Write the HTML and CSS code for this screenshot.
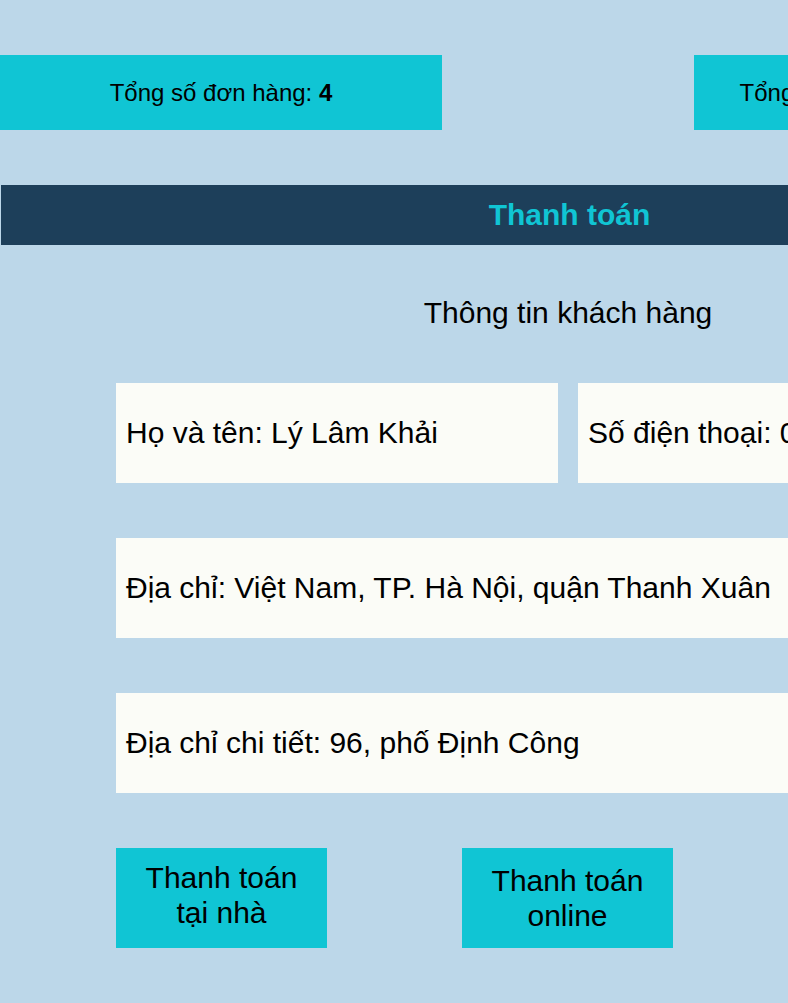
FILE: index.html
```html
<!DOCTYPE html>
<html lang="vi">
<head>
<meta charset="utf-8">
<title>Thanh toán</title>
<link rel="stylesheet" href="styles.css">
</head>
<body>
<div class="page">
  <div class="summary">
    <div class="stat"><span>Tổng số đơn hàng: <b>4</b></span></div>
    <div class="stat"><span>Tổng tiền hàng: <b>12.450.000 VNĐ</b></span></div>
  </div>
  <div class="bar"><h2 class="bar-title">Thanh toán</h2></div>
  <h3 class="section-title">Thông tin khách hàng</h3>
  <div class="info">
    <div class="row two">
      <div class="field">Họ và tên: Lý Lâm Khải</div>
      <div class="field">Số điện thoại: 0987654321</div>
    </div>
    <div class="row">
      <div class="field">Địa chỉ: Việt Nam, TP. Hà Nội, quận Thanh Xuân</div>
    </div>
    <div class="row">
      <div class="field">Địa chỉ chi tiết: 96, phố Định Công</div>
    </div>
    <div class="actions">
      <div class="btn btn-home">Thanh toán tại nhà</div>
      <div class="btn">Thanh toán online</div>
      <div class="btn">Quay lại</div>
    </div>
  </div>
</div>
</body>
</html>
```

FILE: styles.css
```css
html, body {
  margin: 0;
  padding: 0;
  background: #bcd7e9;
  font-family: "Liberation Sans", Arial, sans-serif;
  color: #000;
}
.page {
  width: 1136px;
  padding-top: 55px;
  padding-bottom: 60px;
}
.summary {
  display: flex;
  justify-content: space-between;
}
.stat {
  width: 442px;
  height: 75px;
  background: #10c5d4;
  display: flex;
  align-items: center;
  justify-content: center;
  font-size: 24px;
  white-space: nowrap;
}
.bar {
  margin: 55px -2px 0 1px;
  height: 60px;
  background: #1d3f5a;
  display: flex;
  align-items: center;
  justify-content: center;
}
.bar-title {
  margin: 0;
  color: #10c5d4;
  font-size: 30px;
  font-weight: bold;
}
.section-title {
  margin: 48px 0 0;
  height: 40px;
  line-height: 40px;
  text-align: center;
  font-size: 30px;
  font-weight: normal;
}
.info {
  width: 904px;
  margin: 50px auto 0;
  display: flex;
  flex-direction: column;
  gap: 55px;
}
.row {
  display: flex;
  gap: 20px;
}
.field {
  flex: 1;
  height: 100px;
  background: #fbfcf7;
  display: flex;
  align-items: center;
  padding: 0 10px;
  font-size: 30px;
  white-space: nowrap;
  overflow: hidden;
}
.actions {
  display: flex;
  gap: 135px;
}
.btn {
  width: 211px;
  height: 100px;
  background: #10c5d4;
  display: flex;
  align-items: center;
  justify-content: center;
  text-align: center;
  font-size: 30px;
  line-height: 35px;
  padding: 0 20px;
  box-sizing: border-box;
}
.btn-home {
  padding-bottom: 6px;
}
```
